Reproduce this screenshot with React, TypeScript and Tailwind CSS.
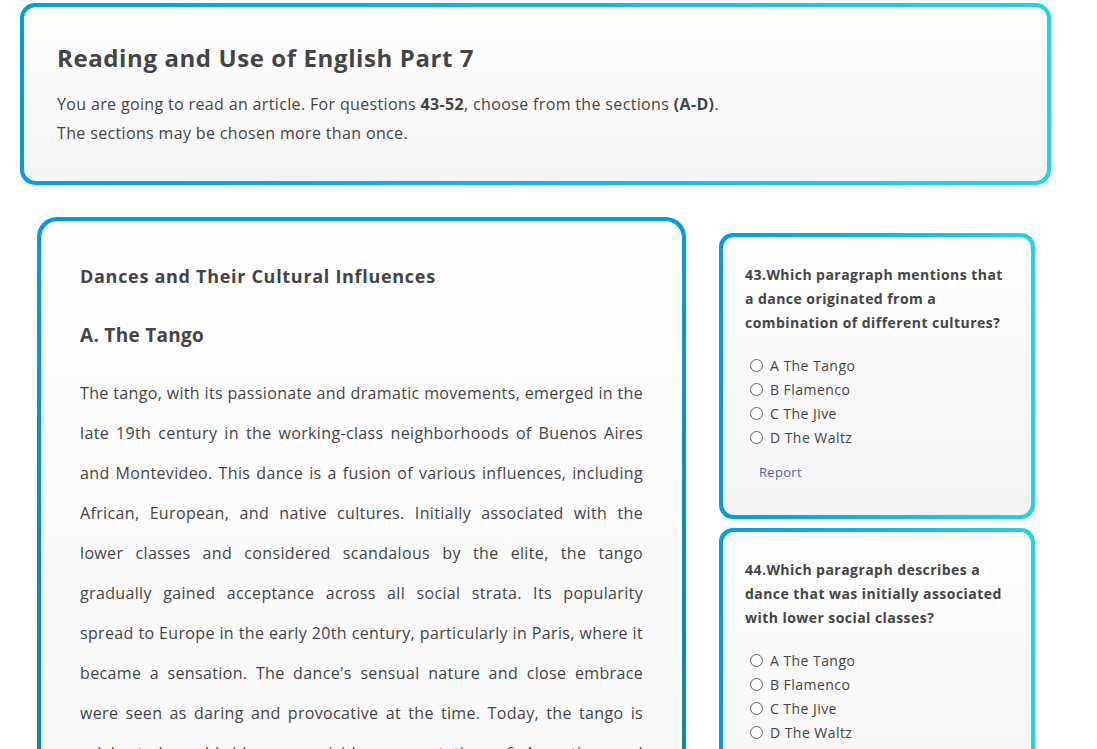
import React from 'react'

const font = { fontFamily: '"Open Sans", "Noto Sans", sans-serif' }

const options = ['A The Tango', 'B Flamenco', 'C The Jive', 'D The Waltz']

const questions = [
  {
    id: 43,
    text: 'Which paragraph mentions that a dance originated from a combination of different cultures?',
  },
  {
    id: 44,
    text: 'Which paragraph describes a dance that was initially associated with lower social classes?',
  },
  {
    id: 45,
    text: 'Which paragraph talks about a dance that became popular among young people?',
  },
]

const sections = [
  {
    title: 'A. The Tango',
    body: "The tango, with its passionate and dramatic movements, emerged in the late 19th century in the working-class neighborhoods of Buenos Aires and Montevideo. This dance is a fusion of various influences, including African, European, and native cultures. Initially associated with the lower classes and considered scandalous by the elite, the tango gradually gained acceptance across all social strata. Its popularity spread to Europe in the early 20th century, particularly in Paris, where it became a sensation. The dance's sensual nature and close embrace were seen as daring and provocative at the time. Today, the tango is celebrated worldwide as a vivid representation of Argentine and Uruguayan culture.",
  },
  {
    title: 'B. Flamenco',
    body: 'Flamenco originated in the Andalusian region of southern Spain and is deeply rooted in the traditions of the Romani people. It combines singing, guitar playing, dance and handclaps, and it expresses deep emotion.',
  },
]

const QuestionCard = ({ id, text }: { id: number; text: string }) => {
  return (
    <div className="rounded-[14px] bg-gradient-to-r from-[#039be5] to-[#22d3e6] p-[4px]">
      <div className="rounded-[11px] bg-gradient-to-b from-white to-[#f4f4f5] px-[22px] pb-[31px] pt-[26px]">
        <p className="text-[14px] font-bold leading-[24px] tracking-[0.45px] text-[#444]">
          {id}.{text}
        </p>
        <div className="mt-[18px] flex flex-col pl-[5px]">
          {options.map((opt) => (
            <label
              key={opt}
              className="flex h-[24px] items-center gap-[7px] text-[14px] tracking-[0.45px] text-[#444]"
            >
              <span className="size-[13px] shrink-0 rounded-full border border-[#666] bg-white" />
              {opt}
            </label>
          ))}
        </div>
        <div className="mt-[11px] pl-[14px] text-[13px] leading-[24px] tracking-[0.3px] text-[#5b5bb5]">Report</div>
      </div>
    </div>
  )
}

export default function App() {
  return (
    <div className="min-h-screen bg-white px-[20px] pt-[3px]" style={font}>
      <div className="w-[1031px] rounded-[15px] bg-gradient-to-r from-[#039be5] to-[#22d3e6] p-[4px]">
        <div className="rounded-[12px] bg-gradient-to-b from-white to-[#f4f4f5] px-[33px] pb-[33px] pt-[35px]">
          <h1 className="text-[24px] font-bold leading-[32px] tracking-[0.6px] text-[#444]">
            Reading and Use of English Part 7
          </h1>
          <div className="mt-[16px] text-[16px] leading-[29px] tracking-[0.35px] text-[#444]">
            <p>
              You are going to read an article. For questions <b>43-52</b>, choose from the sections <b>(A-D)</b>.
            </p>
            <p>The sections may be chosen more than once.</p>
          </div>
        </div>
      </div>

      <div className="mt-[32px] flex items-start gap-[33px] pl-[17px]">
        <div className="w-[649px] shrink-0 rounded-[20px] bg-[linear-gradient(180deg,#039be5_0px,#0a8b97_540px)] p-[4px]">
          <div className="rounded-[17px] bg-gradient-to-b from-white to-[#f4f4f5] px-[39px] pb-[40px] pt-[40px]">
            <h2 className="text-[18px] font-bold leading-[30px] tracking-[0.7px] text-[#444]">
              Dances and Their Cultural Influences
            </h2>
            {sections.map((s) => (
              <div key={s.title}>
                <h3 className="mt-[29px] text-[19px] font-bold leading-[30px] tracking-[0.3px] text-[#444]">
                  {s.title}
                </h3>
                <p className="mt-[23px] text-justify text-[16px] leading-[40px] tracking-[0.35px] text-[#444]">
                  {s.body}
                </p>
              </div>
            ))}
          </div>
        </div>

        <div className="mt-[16px] flex w-[316px] shrink-0 flex-col gap-[9px]">
          {questions.map((q) => (
            <QuestionCard key={q.id} id={q.id} text={q.text} />
          ))}
        </div>
      </div>
    </div>
  )
}
